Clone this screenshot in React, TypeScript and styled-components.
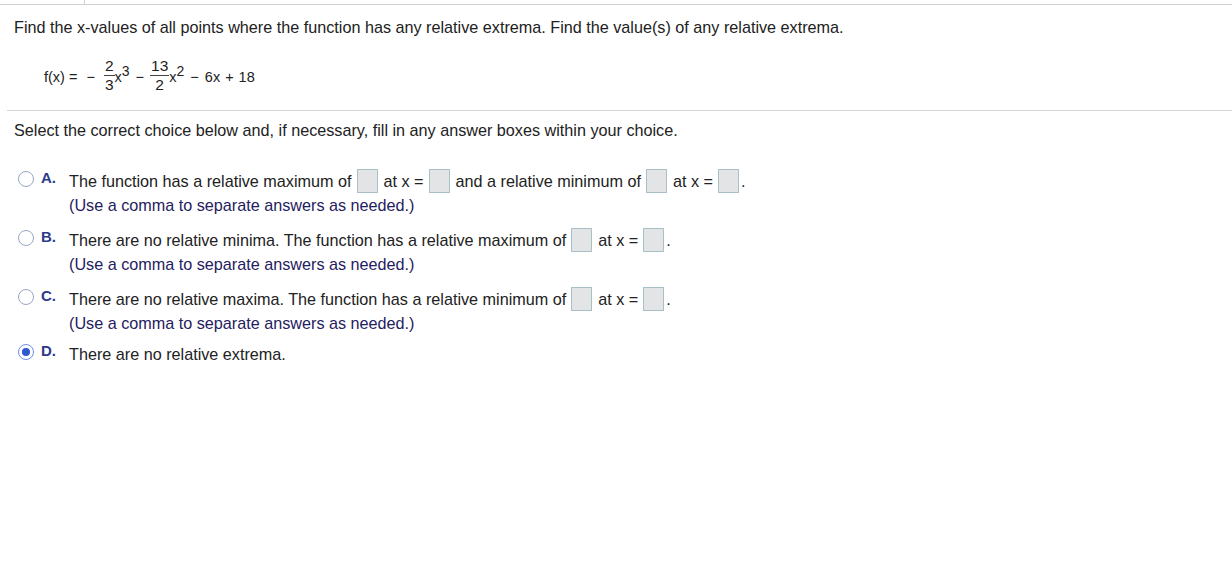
import React from "react";
import styled, { createGlobalStyle } from "styled-components";

const Global = createGlobalStyle`
  html, body { margin: 0; padding: 0; background: #fff; }
  body { font-family: "Liberation Sans", Arial, sans-serif; color: #222; }
`;

const Page = styled.div`
  width: 1232px;
  height: 563px;
  background: #fff;
  overflow: hidden;
`;

const TopBar = styled.div`
  display: flex;
  height: 4px;
  border-bottom: 1px solid #cfcfcf;
`;

const TabCell = styled.div`
  width: 84px;
  border-right: 1px solid #cfcfcf;
`;

const Question = styled.div`
  padding: 13px 0 0 14px;
  height: 105px;
  box-sizing: border-box;
`;

const Prompt = styled.div`
  font-size: 16.2px;
  line-height: 18px;
  color: #222;
`;

const Formula = styled.div`
  display: flex;
  align-items: center;
  margin: 16px 0 0 30px;
  font-size: 14.5px;
  color: #222;
  height: 50px;
`;

const Frac = styled.span`
  display: inline-flex;
  flex-direction: column;
  align-items: center;
  margin: 0 1px;
  line-height: 16px;
  font-size: 15.5px;
  position: relative;
  top: -2px;
`;

const Bar = styled.span`
  display: block;
  width: calc(100% + 2px);
  height: 1px;
  background: #444;
  margin: 1px 0;
`;

const Sup = styled.sup`
  font-size: 14px;
  vertical-align: 6px;
  line-height: 0;
`;

const Op = styled.span<{ gap?: number }>`
  margin: 0 ${(p) => p.gap ?? 5}px;
`;

const Divider = styled.div`
  margin-left: 7px;
  border-top: 1px solid #d4d4d4;
`;

const Instruction = styled.div`
  padding: 10px 0 0 14px;
  font-size: 16.2px;
  line-height: 18px;
  color: #222;
`;

const Choices = styled.div`
  display: flex;
  flex-direction: column;
  padding: 30px 0 0 18px;
`;

const Choice = styled.div<{ mb: number }>`
  display: flex;
  align-items: flex-start;
  margin-bottom: ${(p) => p.mb}px;
`;

const Radio = styled.span<{ checked?: boolean }>`
  width: 16px;
  height: 16px;
  box-sizing: border-box;
  border-radius: 50%;
  border: 1.5px solid ${(p) => (p.checked ? "#6d8ee0" : "#97a6c6")};
  background: #fff;
  display: flex;
  align-items: center;
  justify-content: center;
  margin-top: 2px;
  flex: none;
  &::after {
    content: "";
    display: ${(p) => (p.checked ? "block" : "none")};
    width: 8px;
    height: 8px;
    border-radius: 50%;
    background: #3056d0;
  }
`;

const Letter = styled.span`
  font-weight: bold;
  color: #2c3a8c;
  font-size: 15px;
  width: 28px;
  margin-left: 7px;
  line-height: 24px;
  margin-top: -3px;
  flex: none;
`;

const Body = styled.div`
  display: flex;
  flex-direction: column;
  font-size: 16.2px;
  color: #222;
`;

const Line = styled.div`
  display: flex;
  align-items: center;
  height: 24px;
  white-space: pre;
`;

const Note = styled.div`
  color: #1f2160;
  height: 24px;
  line-height: 24px;
`;

const Box = styled.span<{ last?: boolean }>`
  display: inline-block;
  width: 19px;
  height: 22px;
  background: #e2e4e5;
  border: 1px solid #a8c0c6;
  margin: 0 ${(p) => (p.last ? 2 : 6)}px 0 5px;
`;

export default function App() {
  return (
    <Page>
      <Global />
      <TopBar>
        <TabCell />
      </TopBar>
      <Question>
        <Prompt>
          Find the x-values of all points where the function has any relative extrema. Find the value(s) of any relative extrema.
        </Prompt>
        <Formula>
          <span>f(x) =</span>
          <Op gap={9}>−</Op>
          <Frac>
            <span>2</span>
            <Bar />
            <span>3</span>
          </Frac>
          <span>
            x<Sup>3</Sup>
          </span>
          <Op gap={6}>−</Op>
          <Frac>
            <span>13</span>
            <Bar />
            <span>2</span>
          </Frac>
          <span>
            x<Sup>2</Sup>
          </span>
          <Op gap={6}>−</Op>
          <span>6x</span>
          <Op gap={5}>+</Op>
          <span>18</span>
        </Formula>
      </Question>
      <Divider />
      <Instruction>
        Select the correct choice below and, if necessary, fill in any answer boxes within your choice.
      </Instruction>
      <Choices>
        <Choice mb={11}>
          <Radio />
          <Letter>A.</Letter>
          <Body>
            <Line>
              The function has a relative maximum of<Box />at x =<Box />and a relative minimum of<Box />at x =<Box last />.
            </Line>
            <Note>(Use a comma to separate answers as needed.)</Note>
          </Body>
        </Choice>
        <Choice mb={11}>
          <Radio />
          <Letter>B.</Letter>
          <Body>
            <Line>
              There are no relative minima. The function has a relative maximum of<Box />at x =<Box last />.
            </Line>
            <Note>(Use a comma to separate answers as needed.)</Note>
          </Body>
        </Choice>
        <Choice mb={7}>
          <Radio />
          <Letter>C.</Letter>
          <Body>
            <Line>
              There are no relative maxima. The function has a relative minimum of<Box />at x =<Box last />.
            </Line>
            <Note>(Use a comma to separate answers as needed.)</Note>
          </Body>
        </Choice>
        <Choice mb={0}>
          <Radio checked />
          <Letter>D.</Letter>
          <Body>
            <Line>There are no relative extrema.</Line>
          </Body>
        </Choice>
      </Choices>
    </Page>
  );
}
